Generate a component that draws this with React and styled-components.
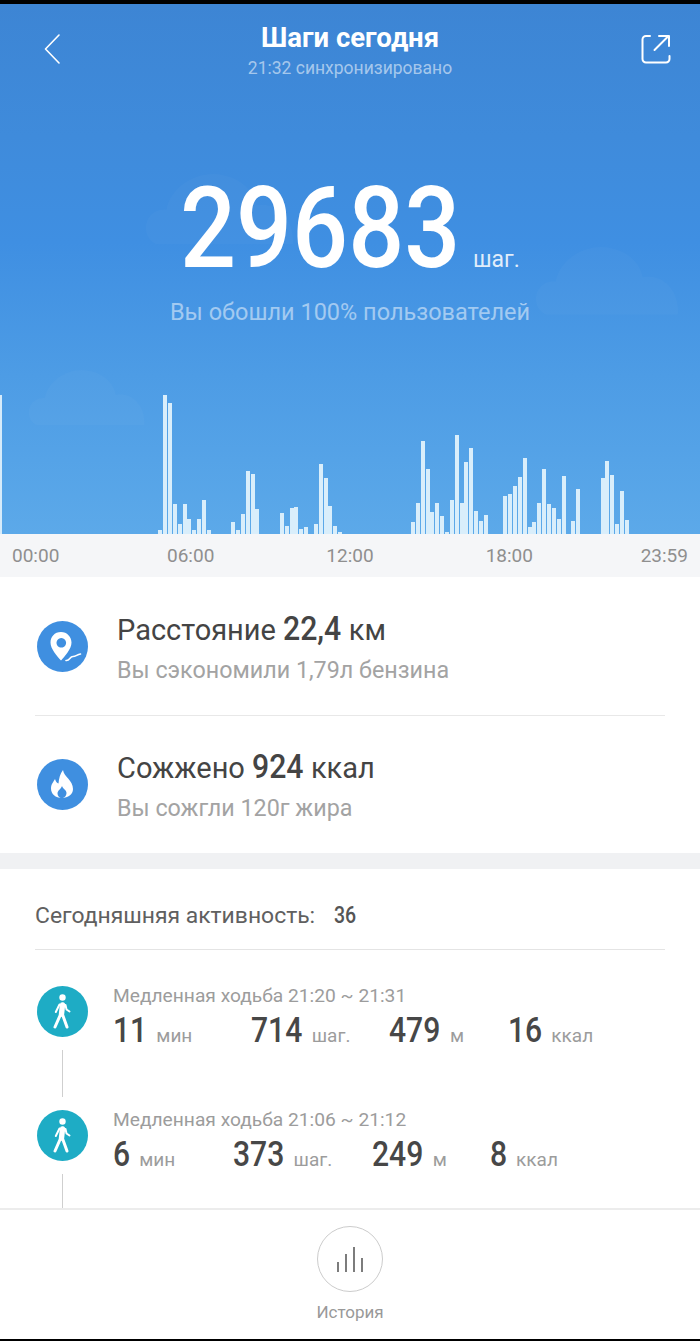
import React from 'react';
import styled, { createGlobalStyle } from 'styled-components';

const Global = createGlobalStyle`
  html, body { margin: 0; padding: 0; background: #000; }
  * { box-sizing: border-box; }
  body { font-family: Roboto, "Noto Sans", sans-serif; }
`;

const DIGIT = 0.5615;

const Screen = styled.div`
  width: 700px; height: 1341px; overflow: hidden; display: flex; flex-direction: column;
  border-top: 4px solid #000; border-bottom: 2px solid #000; background: #fff;
`;
const Hero = styled.header`
  position: relative; height: 530px; flex: none; overflow: hidden; display: flex; flex-direction: column;
  background: linear-gradient(180deg, #3d85d4 0%, #3f8bdb 25%, #3f8fe2 45%, #4d9ce5 70%, #5ca9e9 100%);
`;
const Cloud = styled.svg`
  position: absolute; left: ${p => p.$x}px; top: ${p => p.$y}px; fill: rgba(255,255,255,.022);
`;
const TopBar = styled.div`
  position: relative; height: 74px; display: flex; justify-content: space-between; padding: 30px 29px 0 44px;
`;
const IconButton = styled.svg`
  display: block; fill: none; stroke: #fff; stroke-linecap: round; stroke-linejoin: round;
`;
const TitleBlock = styled.div`
  position: absolute; left: 0; right: 0; top: 18px; text-align: center;
`;
const Title = styled.div`
  font-size: 27.5px; font-weight: 700; line-height: 32px; color: #fff;
`;
const Sync = styled.div`
  font-size: 17.5px; line-height: 20px; margin-top: 4px; color: rgba(255,255,255,.55);
`;
const StepsRow = styled.div`
  position: relative; display: flex; align-items: baseline; justify-content: center; margin-top: 92px; height: 116px;
`;
/* Condensed numerals: the digits are drawn narrower than the face, and the margin gives the width back. */
const StepsValue = styled.div`
  display: inline-block; font-size: 114px; font-weight: 500; line-height: 116px; color: #fff;
  transform: scaleX(.865); transform-origin: left;
  margin-right: ${-0.135 * DIGIT * 5}em;
`;
const StepsUnit = styled.div`
  font-size: 23px; color: rgba(255,255,255,.85); margin-left: 12px;
`;
const Beaten = styled.div`
  position: relative; text-align: center; font-size: 23.5px; line-height: 28px; margin-top: 12px; color: rgba(255,255,255,.5);
`;
const Chart = styled.div`
  position: absolute; left: 0; right: 0; bottom: 0; height: 140px; display: flex; align-items: flex-end;
`;
const EdgeBar = styled.div`
  width: 2px; height: 139px; flex: none; background: #d6ebfa;
`;
const Bars = styled.div`
  display: grid; grid-template-columns: repeat(144, 4.861px); align-items: end; height: 100%; padding-left: 0.8px;
`;
const Bar = styled.div`
  width: 4px; background: #d9eefb;
`;
const Axis = styled.div`
  height: 43px; flex: none; background: #f5f6f8; display: flex; justify-content: space-between; align-items: center;
  padding: 0 12px; font-size: 19px; color: #8f8f8f;
`;
const AxisMiddle = styled.div`
  display: flex; gap: 112px;
`;
const Summary = styled.section`
  flex: none; height: 276px; padding: 0 35px; display: flex; flex-direction: column;
`;
const SummaryRow = styled.div`
  height: 138px; display: flex; align-items: center; gap: 29px; padding-left: 2px;
  & + & { border-top: 1px solid #e8e8e8; }
`;
const RoundIcon = styled.svg`
  flex: none; display: block;
`;
const SummaryText = styled.div`
  display: flex; flex-direction: column; margin-top: 2px;
`;
const SummaryTitle = styled.div`
  font-size: 29px; line-height: 38px; color: #444; white-space: nowrap;
`;
const Strong = styled.span`
  display: inline-block; font-weight: 500; font-size: 32.5px; color: #444;
  transform: scaleX(.93); transform-origin: left;
  margin-right: ${p => -0.07 * DIGIT * p.$n}em;
`;
const SummarySub = styled.div`
  font-size: 23.3px; line-height: 30px; margin-top: 6px; color: #a3a3a3; white-space: nowrap;
`;
const Gap = styled.div`
  height: 16px; flex: none; background: #f0f1f3;
`;
const Activity = styled.section`
  flex: 1; min-height: 0; overflow: hidden; padding: 0 35px;
`;
const ActivityHead = styled.div`
  height: 81px; border-bottom: 1px solid #e4e4e4; display: flex; align-items: center; gap: 19px; font-size: 22.9px; color: #606060; padding-top: 13px;
`;
const ActivityCount = styled.span`
  display: inline-block; font-weight: 500; font-size: 23px; color: #555;
  transform: scaleX(.85); transform-origin: left;
`;
const Item = styled.div`
  display: flex; gap: 25px; height: 124px; padding: 36px 0 0 2px;
`;
const Rail = styled.div`
  width: 51px; flex: none; display: flex; flex-direction: column; align-items: center;
`;
const RailLine = styled.div`
  width: 1px; height: 47px; margin-top: 13px; background: #cfcfcf; flex: none;
`;
const ItemBody = styled.div`
  display: flex; flex-direction: column; margin-top: -1px;
`;
const ItemLabel = styled.div`
  font-size: 19.2px; line-height: 22px; color: #9c9c9c; white-space: nowrap;
`;
const Stats = styled.div`
  display: flex; align-items: baseline; height: 38px; line-height: 38px; margin-top: 5px; white-space: nowrap;
`;
const Stat = styled.div`
  display: flex; align-items: baseline; margin-left: ${p => p.$offset}px;
`;
const StatValue = styled.span`
  display: inline-block; font-weight: 500; font-size: 35px; color: #474747;
  transform: scaleX(.86); transform-origin: left;
  margin-right: ${p => -0.14 * DIGIT * p.$n}em;
`;
const StatUnit = styled.span`
  font-size: 19px; color: #9c9c9c; margin-left: 9px;
`;
const Footer = styled.footer`
  height: 131px; flex: none; border-top: 2px solid #ececec; display: flex; flex-direction: column; align-items: center; padding-top: 16px;
`;
const HistoryButton = styled.div`
  width: 66px; height: 66px; border-radius: 50%; border: 1px solid #ccc; display: flex; align-items: center; justify-content: center;
`;
const HistoryLabel = styled.div`
  font-size: 17px; line-height: 22px; margin-top: 9px; color: #999;
`;

const bars = {
  0: 4.3, 1: 138.7, 2: 131.3, 3: 30.3, 4: 10, 5: 29.7, 6: 15.3, 7: 3.7, 8: 14.7, 9: 34, 10: 4.3,
  15: 12.3, 16: 4.3, 17: 20, 18: 62.7, 19: 60.3, 20: 25.3, 25: 20.7, 26: 7.7, 27: 26, 28: 26.7, 29: 5.3, 30: 7.3,
  32: 10.3, 33: 70, 34: 56, 35: 28.3, 36: 7.7, 37: 2.3,
  52: 12, 53: 30.7, 54: 93, 55: 65.3, 56: 21.7, 57: 30.7, 58: 17.7, 59: 1.7, 60: 34, 61: 99, 62: 30.7, 63: 71.7, 64: 86.3, 65: 23, 66: 12.7, 67: 19,
  71: 37.7, 72: 39.7, 73: 48.3, 74: 57.3, 75: 76, 76: 7.3, 77: 12, 78: 30.7, 79: 65, 80: 30.3, 81: 25.7, 82: 15.3, 83: 58,
  85: 12.7, 86: 45.3, 91: 56, 92: 73, 93: 59.3, 94: 10, 95: 42.7, 96: 13.7,
};
const START = 32;

const CloudShape = ({ x, y, w }) => (
  <Cloud $x={x} $y={y} width={w} height={w * 0.5} viewBox="0 0 140 70">
    <path d="M10 70 C-6 62 0 36 20 38 C24 16 50 0 74 6 C92 10 102 22 104 34 C122 30 140 46 138 70 Z" />
  </Cloud>
);

const PinIcon = () => (
  <RoundIcon width="51" height="51" viewBox="0 0 51 51">
    <circle cx="25.5" cy="25.5" r="25.5" fill="#3f8fe0" />
    <path fill="#fff" fillRule="evenodd" d="M24 11C17.5 11 13.5 16 13.5 21.5C13.5 28 20 35 24 39.5C28 35 34.5 28 34.5 21.5C34.5 16 30 11 24 11ZM24.3 17A4.8 4.8 0 1 1 24.29 17Z" />
    <path fill="none" stroke="#fff" strokeWidth="1.6" strokeLinecap="round" d="M29 39.500C33 40 32.500 35.500 36 35.500C39 35.500 40 33.500 43.500 33" />
  </RoundIcon>
);
const FlameIcon = () => (
  <RoundIcon width="51" height="51" viewBox="0 0 51 51">
    <circle cx="25.5" cy="25.5" r="25.5" fill="#3f8fe0" />
    <path fill="#fff" fillRule="evenodd" d="M26 11C27 18 36 21 36 30C36 35.5 31 39 25 39C18.5 39 14 35 14 29.5C14 25 16.5 23 18 20C19 23 20 24 21.5 24.5C22 19 23 15 26 11ZM25 27C26 30 29.5 31 29.5 34C29.5 37 27 39 25 39C22.5 39 20.5 37 20.5 34.5C20.5 31.5 24 30 25 27Z" />
  </RoundIcon>
);
const WalkIcon = () => (
  <RoundIcon width="51" height="51" viewBox="0 0 51 51">
    <circle cx="25.5" cy="25.5" r="25.5" fill="#1eacc5" />
    <circle cx="25.5" cy="11.5" r="3.2" fill="#fff" />
    <g fill="none" stroke="#fff" strokeLinecap="round" strokeLinejoin="round">
      <path strokeWidth="5.4" d="M25.5 19L24.5 28" />
      <path strokeWidth="3" d="M23.5 28.500L18 41M25.5 28.500L30 41" />
      <path strokeWidth="2" d="M22.500 18.500L18.800 26M28.500 19L29.500 23.500L32.500 25.500" />
    </g>
  </RoundIcon>
);

const activities = [
  { label: 'Медленная ходьба 21:20 ~ 21:31', stats: [['11', 'мин', 0], ['714', 'шаг.', 59], ['479', 'м', 39], ['16', 'ккал', 44]] },
  { label: 'Медленная ходьба 21:06 ~ 21:12', stats: [['6', 'мин', 0], ['373', 'шаг.', 58], ['249', 'м', 40], ['8', 'ккал', 43]] },
];

export default function App() {
  return (
    <>
      <Global />
      <Screen>
        <Hero>
          <CloudShape x={145} y={165} w={150} />
          <CloudShape x={535} y={238} w={145} />
          <CloudShape x={28} y={362} w={118} />
          <TopBar>
            <IconButton width="16" height="30" viewBox="0 0 16 30" strokeWidth="1.6">
              <path d="M15 1L1.5 15L15 29" />
            </IconButton>
            <TitleBlock>
              <Title>Шаги сегодня</Title>
              <Sync>21:32 синхронизировано</Sync>
            </TitleBlock>
            <IconButton width="30" height="30" viewBox="0 0 30 30" strokeWidth="2">
              <path d="M9 2H5A3.5 3.5 0 0 0 1.5 5.5V25A3.5 3.5 0 0 0 5 28.5H25A3.5 3.5 0 0 0 28.5 25V22" />
              <path d="M13.5 16L27.5 2M18 2H28V12" />
            </IconButton>
          </TopBar>
          <StepsRow>
            <StepsValue>29683</StepsValue>
            <StepsUnit>шаг.</StepsUnit>
          </StepsRow>
          <Beaten>Вы обошли 100% пользователей</Beaten>
          <Chart>
            <EdgeBar />
            <Bars>
              {Array.from({ length: 144 }, (_, i) => (
                <Bar key={i} style={{ height: (bars[i - START] || 0) + 'px' }} />
              ))}
            </Bars>
          </Chart>
        </Hero>
        <Axis>
          <span>00:00</span>
          <AxisMiddle><span>06:00</span><span>12:00</span><span>18:00</span></AxisMiddle>
          <span>23:59</span>
        </Axis>
        <Summary>
          <SummaryRow>
            <PinIcon />
            <SummaryText>
              <SummaryTitle>Расстояние <Strong $n={3.35}>22,4</Strong> км</SummaryTitle>
              <SummarySub>Вы сэкономили 1,79л бензина</SummarySub>
            </SummaryText>
          </SummaryRow>
          <SummaryRow>
            <FlameIcon />
            <SummaryText>
              <SummaryTitle>Сожжено <Strong $n={3}>924</Strong> ккал</SummaryTitle>
              <SummarySub>Вы сожгли 120г жира</SummarySub>
            </SummaryText>
          </SummaryRow>
        </Summary>
        <Gap />
        <Activity>
          <ActivityHead>Сегодняшняя активность: <ActivityCount>36</ActivityCount></ActivityHead>
          {activities.map(a => (
            <Item key={a.label}>
              <Rail>
                <WalkIcon />
                <RailLine />
              </Rail>
              <ItemBody>
                <ItemLabel>{a.label}</ItemLabel>
                <Stats>
                  {a.stats.map(([v, u, o]) => (
                    <Stat key={u} $offset={o}>
                      <StatValue $n={v.length}>{v}</StatValue>
                      <StatUnit>{u}</StatUnit>
                    </Stat>
                  ))}
                </Stats>
              </ItemBody>
            </Item>
          ))}
        </Activity>
        <Footer>
          <HistoryButton>
            <svg width="26" height="25" viewBox="0 0 26 25" fill="none" stroke="#6f6f6f" strokeWidth="1.8">
              <path d="M1 25V15M9 25V7M17 25V0M25 25V11" />
            </svg>
          </HistoryButton>
          <HistoryLabel>История</HistoryLabel>
        </Footer>
      </Screen>
    </>
  );
}
